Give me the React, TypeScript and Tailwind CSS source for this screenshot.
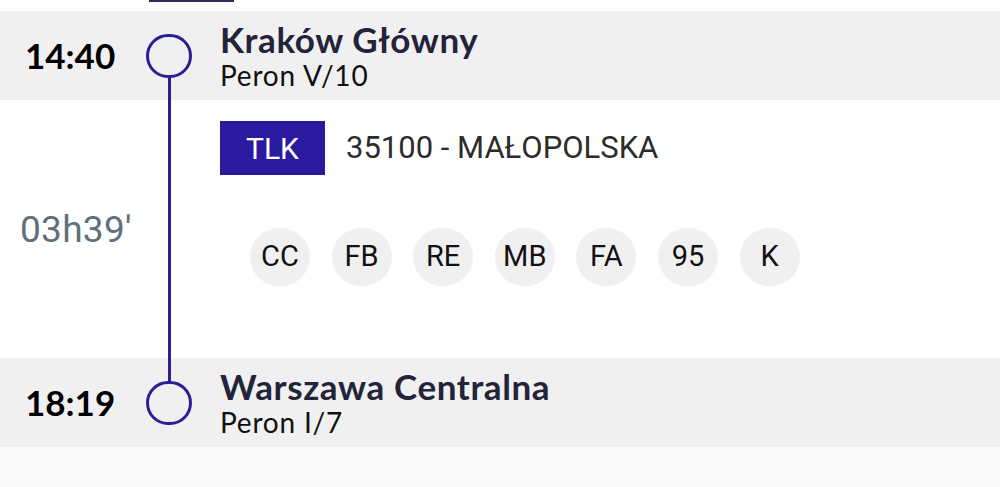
import React from "react";

const lato = { fontFamily: "Lato, 'Noto Sans', sans-serif" };
const roboto = { fontFamily: "Roboto, 'Noto Sans', sans-serif" };

const chips = ["CC", "FB", "RE", "MB", "FA", "95", "K"];

function Stop({ time, name, platform, line }: { time: string; name: string; platform: string; line: "down" | "up" }) {
  return (
    <div className="flex h-[89px] bg-[#f0f0f0]">
      <div className="w-[145px] pl-[25px] flex items-center">
        <span className="text-[35px] font-bold text-black leading-none" style={lato}>{time}</span>
      </div>
      <div className="w-[48px] flex flex-col items-center">
        <div className={"flex-1 w-[3px] " + (line === "up" ? "bg-[#2a1f96]" : "")} />
        <div className="w-[46px] h-[44px] rounded-full border-[3px] border-[#2a1f96]" />
        <div className={"flex-1 w-[3px] " + (line === "down" ? "bg-[#2a1f96]" : "")} />
      </div>
      <div className="pl-[27px] flex flex-col justify-center pt-[1px]" style={lato}>
        <div className="text-[35px] font-bold text-[#23233a] leading-[38px] tracking-[0.6px]">{name}</div>
        <div className="text-[28px] text-[#111] leading-[35px] tracking-[0.8px]">{platform}</div>
      </div>
    </div>
  );
}

export default function App() {
  return (
    <div className="w-[1000px] h-[487px] bg-[#f9f9f9] overflow-hidden">
      <div className="h-[11px] bg-white">
        <div className="ml-[149px] w-[85px] h-[2px] bg-[#2d2b55]" />
      </div>
      <div className="shadow-[inset_0_5px_5px_-3px_rgba(0,0,0,0.15)]">
        <Stop time="14:40" name="Kraków Główny" platform="Peron V/10" line="down" />
      </div>
      <div className="flex h-[258px] bg-white">
        <div className="w-[145px] pl-[20px] flex items-center">
          <span className="text-[37px] text-[#5f6f7e] leading-none tracking-[0.3px]" style={roboto}>03h39'</span>
        </div>
        <div className="w-[48px] flex justify-center">
          <div className="w-[3px] bg-[#2a1f96]" />
        </div>
        <div className="pl-[27px] pt-[21px]" style={roboto}>
          <div className="flex items-center gap-[21px]">
            <div className="w-[105px] h-[54px] bg-[#2a1a9f] text-white text-[30px] flex items-center justify-center">TLK</div>
            <span className="text-[31px] text-[#2c2c2c]">35100 - MAŁOPOLSKA</span>
          </div>
          <div className="flex gap-[21.6px] ml-[30px] mt-[53px]">
            {chips.map((c) => (
              <div key={c} className="w-[60px] h-[58px] rounded-full bg-[#f0f0f0] flex items-center justify-center text-[29px] text-[#111]">
                {c}
              </div>
            ))}
          </div>
        </div>
      </div>
      <Stop time="18:19" name="Warszawa Centralna" platform="Peron I/7" line="up" />
    </div>
  );
}
